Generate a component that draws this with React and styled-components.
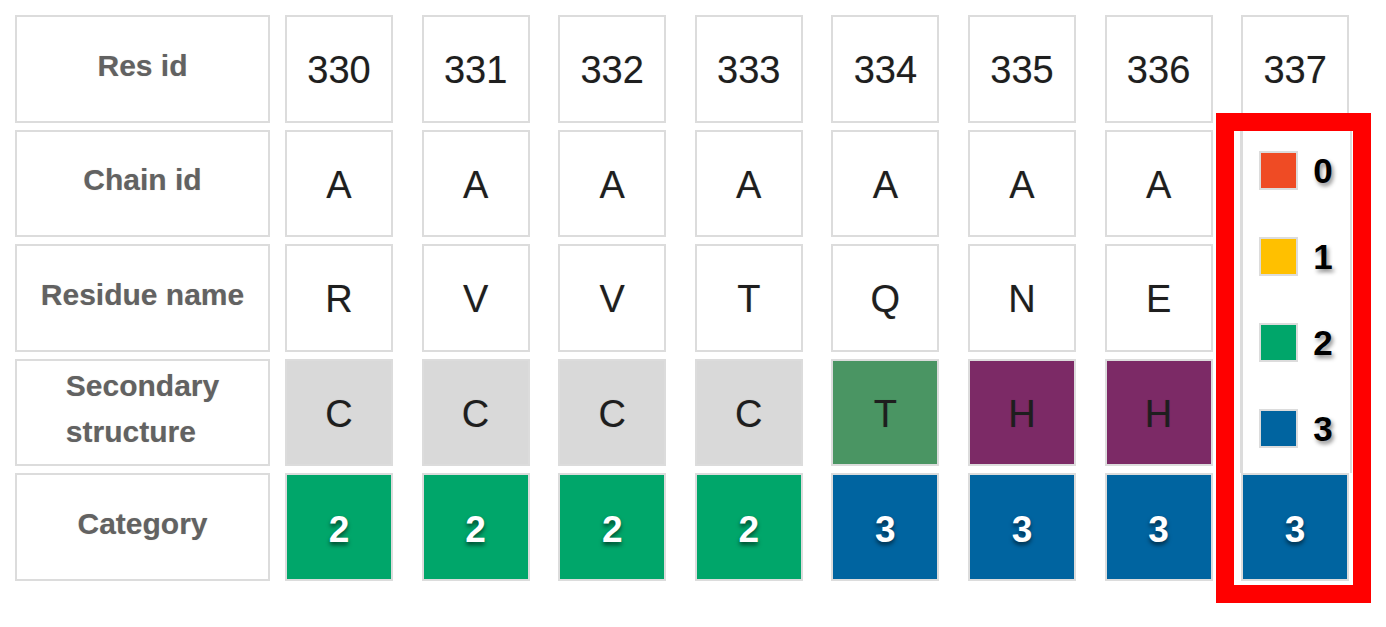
import React from 'react';
import styled, { createGlobalStyle } from 'styled-components';

const GlobalStyle = createGlobalStyle`
  html, body {
    margin: 0;
    padding: 0;
    background: #ffffff;
    font-family: "Liberation Sans", Arial, sans-serif;
  }
`;

const Page = styled.div`
  padding: 15px 0 30px 15px;
`;

const Table = styled.div`
  display: grid;
  grid-template-columns: 255px repeat(8, 136.6px);
  grid-template-rows: repeat(5, 107.5px);
  row-gap: 7px;
`;

const Label = styled.div`
  grid-column: 1;
  box-sizing: border-box;
  border: 2px solid #dcdcdc;
  display: flex;
  align-items: center;
  justify-content: center;
  padding-bottom: 6px;
  color: #626262;
  font-weight: 700;
  font-size: 30px;
  line-height: 46px;
  text-shadow: 0 0 1px rgba(120, 100, 80, 0.35);

  & > span {
    text-align: left;
  }
`;

const Cell = styled.div`
  box-sizing: border-box;
  width: 108px;
  margin-left: 15px;
  border: 2px solid #dcdcdc;
  background: ${p => p.bg || '#ffffff'};
  display: flex;
  align-items: center;
  justify-content: center;
  padding-top: 4px;
  font-size: 38px;
  color: #1e1e1e;
  text-shadow: 0 0 1px rgba(0, 0, 0, 0.25);
`;

const CategoryCell = styled(Cell)`
  font-weight: 700;
  font-size: 37px;
  color: #ffffff;
  padding-top: 6px;
  text-shadow: 0 3px 4px rgba(0, 0, 0, 0.55);
`;

const LastCategoryCell = styled(CategoryCell)`
  grid-column: 9;
  grid-row: 5;
`;

const Legend = styled.div`
  box-sizing: border-box;
  grid-column: 9;
  grid-row: 2 / 5;
  width: 112px;
  margin-left: 14px;
  margin-bottom: -7px;
  background: #ffffff;
  border-left: 3px solid #dcdcdc;
  border-right: 2px solid #dcdcdc;
  display: flex;
  flex-direction: column;
  gap: 47px;
  padding: 21px 0 0 16px;
  z-index: 1;
`;

const LegendItem = styled.div`
  display: flex;
  align-items: center;
  gap: 15px;
`;

const Swatch = styled.div`
  box-sizing: border-box;
  width: 39px;
  height: 39px;
  border: 2px solid #dcdcdc;
  background: ${p => p.color};
`;

const LegendNum = styled.span`
  font-weight: 700;
  font-size: 35px;
  line-height: 39px;
  color: #000000;
  text-shadow: 2px 3px 4px rgba(0, 0, 0, 0.45);
`;

const Highlight = styled.div`
  box-sizing: border-box;
  grid-column: 9;
  grid-row: 2 / 6;
  align-self: start;
  justify-self: start;
  width: 155px;
  height: 490px;
  margin: -16.5px 0 0 -10px;
  border: 18px solid #ff0000;
  pointer-events: none;
  z-index: 2;
`;

const ssColors = { C: '#d9d9d9', T: '#4a9563', H: '#7c2a66' };
const catColors = { 0: '#ef4b24', 1: '#ffc000', 2: '#00a66a', 3: '#0064a0' };

const residues = [
  { id: 330, chain: 'A', name: 'R', ss: 'C', cat: 2 },
  { id: 331, chain: 'A', name: 'V', ss: 'C', cat: 2 },
  { id: 332, chain: 'A', name: 'V', ss: 'C', cat: 2 },
  { id: 333, chain: 'A', name: 'T', ss: 'C', cat: 2 },
  { id: 334, chain: 'A', name: 'Q', ss: 'T', cat: 3 },
  { id: 335, chain: 'A', name: 'N', ss: 'H', cat: 3 },
  { id: 336, chain: 'A', name: 'E', ss: 'H', cat: 3 },
];

export default function App() {
  return (
    <Page>
      <GlobalStyle />
      <Table>
        <Label><span>Res id</span></Label>
        {residues.map(r => <Cell key={'id' + r.id}>{r.id}</Cell>)}
        <Cell>337</Cell>

        <Label><span>Chain id</span></Label>
        {residues.map(r => <Cell key={'ch' + r.id}>{r.chain}</Cell>)}
        <Legend>
          {[0, 1, 2, 3].map(c => (
            <LegendItem key={c}>
              <Swatch color={catColors[c]} />
              <LegendNum>{c}</LegendNum>
            </LegendItem>
          ))}
        </Legend>

        <Label><span>Residue name</span></Label>
        {residues.map(r => <Cell key={'rn' + r.id}>{r.name}</Cell>)}

        <Label><span>Secondary<br />structure</span></Label>
        {residues.map(r => <Cell key={'ss' + r.id} bg={ssColors[r.ss]}>{r.ss}</Cell>)}

        <Label><span>Category</span></Label>
        {residues.map(r => (
          <CategoryCell key={'cat' + r.id} bg={catColors[r.cat]}>{r.cat}</CategoryCell>
        ))}
        <LastCategoryCell bg={catColors[3]}>3</LastCategoryCell>

        <Highlight />
      </Table>
    </Page>
  );
}
